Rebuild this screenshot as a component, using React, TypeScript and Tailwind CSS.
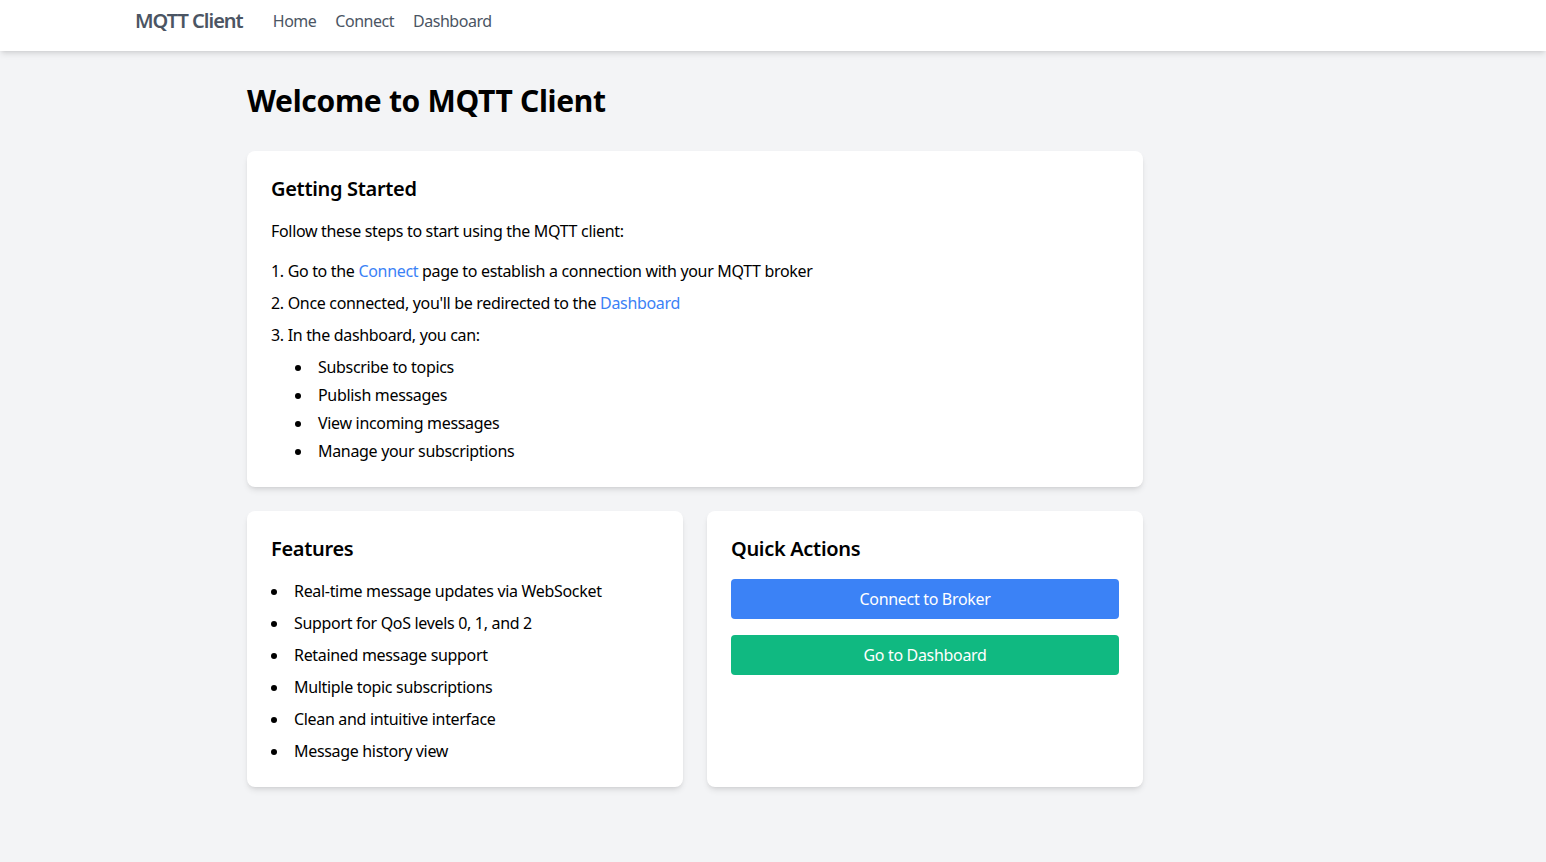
import React from "react";

const font = { fontFamily: '"Segoe UI", "Noto Sans", "Open Sans", sans-serif' };

function Navbar() {
  return (
    <nav className="h-[51px] bg-white shadow-md">
      <div className="mx-auto flex max-w-7xl items-center pt-[7px] tracking-[-0.03em]">
        <span className="pl-[2px] text-xl font-semibold leading-7 tracking-[-0.05em] text-[#4b5563]">MQTT Client</span>
        <div className="ml-[30px] flex items-center gap-[19px] text-base text-[#4b5563]">
          <a href="#">Home</a>
          <a href="#">Connect</a>
          <a href="#">Dashboard</a>
        </div>
      </div>
    </nav>
  );
}

function Card({ title, children }: { title: string; children: React.ReactNode }) {
  return (
    <section className="rounded-lg bg-white p-6 shadow-md">
      <h2 className="mb-4 text-xl font-semibold leading-7 text-black">{title}</h2>
      {children}
    </section>
  );
}

const features = [
  "Real-time message updates via WebSocket",
  "Support for QoS levels 0, 1, and 2",
  "Retained message support",
  "Multiple topic subscriptions",
  "Clean and intuitive interface",
  "Message history view",
];

const actions = ["Subscribe to topics", "Publish messages", "View incoming messages", "Manage your subscriptions"];

export default function App() {
  return (
    <div className="min-h-[862px] bg-[#f3f4f6] text-black" style={font}>
      <Navbar />
      <main className="ml-[247px] w-[896px] py-8 tracking-[-0.02em]">
        <h1 className="mb-8 text-3xl font-bold leading-9">Welcome to MQTT Client</h1>

        <Card title="Getting Started">
          <p className="mb-4">Follow these steps to start using the MQTT client:</p>
          <ol className="space-y-2">
            <li>
              1. Go to the <a href="#" className="text-[#3b82f6]">Connect</a> page to establish a connection with your MQTT broker
            </li>
            <li>
              2. Once connected, you'll be redirected to the <a href="#" className="text-[#3b82f6]">Dashboard</a>
            </li>
            <li>
              3. In the dashboard, you can:
              <ul className="ml-6 mt-2 list-inside list-disc space-y-1">
                {actions.map((a) => (
                  <li key={a}>{a}</li>
                ))}
              </ul>
            </li>
          </ol>
        </Card>

        <div className="mt-6 grid grid-cols-2 gap-6">
          <Card title="Features">
            <ul className="list-inside list-disc space-y-2">
              {features.map((f) => (
                <li key={f}>{f}</li>
              ))}
            </ul>
          </Card>
          <Card title="Quick Actions">
            <div className="space-y-4">
              <button className="block w-full rounded bg-[#3b82f6] px-4 py-2 text-white">Connect to Broker</button>
              <button className="block w-full rounded bg-[#10b981] px-4 py-2 text-white">Go to Dashboard</button>
            </div>
          </Card>
        </div>
      </main>
    </div>
  );
}
